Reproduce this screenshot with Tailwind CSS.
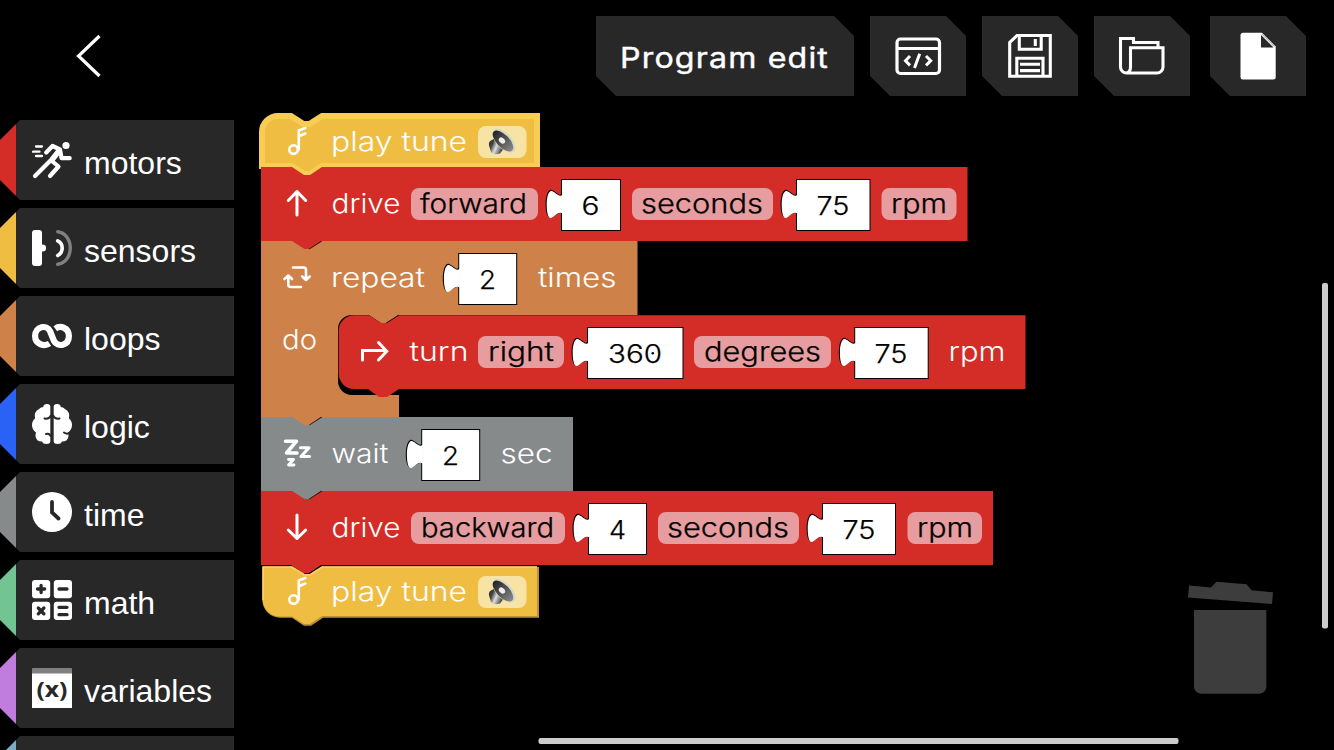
<!DOCTYPE html>
<html lang="en">
<head>
<meta charset="utf-8">
<title>Program edit</title>
<script src="https://cdn.jsdelivr.net/npm/@tailwindcss/browser@4"></script>
</head>
<body class="bg-black">
<div class="w-[1334px] h-[750px] bg-black overflow-hidden flex flex-col text-white">
  <header class="h-[104px] shrink-0 flex items-start pt-4 pl-[68px] pr-7">
    <button class="w-10 h-20 flex items-center justify-center">
      <svg class="w-10 h-12" viewBox="68 32 40 48" fill="none" stroke="#fff" stroke-width="3.2"><path d="M99.500 36L78.500 56L99.500 76"/></svg>
    </button>
    <div class="ml-auto flex">
      <div class="w-[258px] h-20 bg-[#282828] flex items-center justify-center [clip-path:polygon(0_0,238px_0,100%_20px,100%_100%,20px_100%,0_60px)]">
        <svg class="w-[258px] h-20" viewBox="596 16 258 80"><text x="620" y="68" textLength="209" lengthAdjust="spacingAndGlyphs" class="font-['Inter',sans-serif] text-[28px] font-normal tracking-[1px] fill-white" stroke="#fff" stroke-width=".4">Program edit</text></svg>
      </div>
      <button class="ml-4 w-24 h-20 bg-[#282828] [clip-path:polygon(0_0,76px_0,100%_20px,100%_100%,20px_100%,0_60px)]">
        <svg class="w-24 h-20" viewBox="870 16 96 80" fill="none" stroke="#fff" stroke-width="3.200"><rect x="897" y="39" width="42.500" height="34.500" rx="3.500"/><path d="M897 48.500H939.500M910 56l-4.500 4.700l4.500 4.700M919.700 53.800L914.500 68M926 56l4.700 4.700l-4.700 4.700" stroke-width="3"/></svg>
      </button>
      <button class="ml-4 w-24 h-20 bg-[#282828] [clip-path:polygon(0_0,76px_0,100%_20px,100%_100%,20px_100%,0_60px)]">
        <svg class="w-24 h-20" viewBox="982 16 96 80" fill="none" stroke="#fff" stroke-width="3.100"><path d="M1017 35.500H1050.300V76.300H1009.700V42.500Z"/><path d="M1019.300 36V49.300H1041.200V36M1016.800 76V58.300H1043V76M1020 64.300h20M1020 70.600h20M1035.300 39v7"/></svg>
      </button>
      <button class="ml-4 w-24 h-20 bg-[#282828] [clip-path:polygon(0_0,76px_0,100%_20px,100%_100%,20px_100%,0_60px)]">
        <svg class="w-24 h-20" viewBox="1094 16 96 80" fill="none" stroke="#fff" stroke-width="3.100"><path d="M1158 47V42.500H1133.500V38.500H1120.500V67a6 6 0 0 0 6 6H1157a6 6 0 0 0 6-6V47.700H1130.500V67q0 5-4 6"/></svg>
      </button>
      <button class="ml-5 w-24 h-20 bg-[#282828] [clip-path:polygon(0_0,76px_0,100%_20px,100%_100%,20px_100%,0_60px)]">
        <svg class="w-24 h-20" viewBox="1210 16 96 80"><path fill="#fff" d="M1243 32.700H1262L1275.700 46.500V77a2.500 2.500 0 0 1-2.500 2.500H1243a2.500 2.500 0 0 1-2.500-2.500V35.200a2.500 2.500 0 0 1 2.500-2.500Z"/><path fill="#282828" d="M1261 35V47.500H1273.500Z"/><path stroke="#bbb" stroke-width="1.200" d="M1262 34L1274.500 46.500"/></svg>
      </button>
    </div>
  </header>

  <div class="flex h-[646px]">
    <nav class="w-[234px] shrink-0 pt-4 flex flex-col gap-2 overflow-hidden font-['Liberation_Sans',Arial,sans-serif] text-[32px] leading-9">
      <div class="h-20 shrink-0 flex">
        <i class="w-4 bg-[#d42d27] [clip-path:polygon(100%_4px,100%_76px,0_60px,0_20px)]"></i>
        <div class="w-[218px] bg-[#282828] pl-4 flex items-center gap-3 [clip-path:polygon(4px_0,100%_0,100%_100%,4px_100%,0_76px,0_4px)]">
          <svg class="size-10" viewBox="32 140 40 40" fill="none" stroke="#fff" stroke-linecap="round" stroke-linejoin="round"><circle cx="66" cy="145.500" r="3.600" fill="#fff" stroke="none"/><path stroke-width="4.200" d="M46.200 152.500L52.500 146L60 149.500L61.500 158.200H69.700M52 159L35 176M52.500 161.500L58.500 166.500L50 176"/><path stroke-width="5.500" d="M58.500 151.500L53 158.500"/><path stroke-width="2.300" d="M36 146.500h6M33 151.700h6.500M36 156h6"/></svg>
          <span class="pt-[6px]">motors</span>
        </div>
      </div>
      <div class="h-20 shrink-0 flex">
        <i class="w-4 bg-[#f0bd43] [clip-path:polygon(100%_4px,100%_76px,0_60px,0_20px)]"></i>
        <div class="w-[218px] bg-[#282828] pl-4 flex items-center gap-3 [clip-path:polygon(4px_0,100%_0,100%_100%,4px_100%,0_76px,0_4px)]">
          <svg class="size-10" viewBox="32 228 40 40" fill="none" stroke-linecap="round"><rect x="32" y="230" width="10" height="36" rx="3" fill="#fff"/><circle cx="42.500" cy="248" r="3.600" fill="#fff"/><path stroke="#fff" stroke-width="3.600" d="M57.700 240.800Q62.200 243 62.200 248T57.700 255.500"/><path stroke="#808080" stroke-width="3.400" d="M57.700 231.700C65.500 232.500 70.300 240 70.300 248S65.500 263.500 57.700 264.300"/></svg>
          <span class="pt-[6px]">sensors</span>
        </div>
      </div>
      <div class="h-20 shrink-0 flex">
        <i class="w-4 bg-[#ce8148] [clip-path:polygon(100%_4px,100%_76px,0_60px,0_20px)]"></i>
        <div class="w-[218px] bg-[#282828] pl-4 flex items-center gap-3 [clip-path:polygon(4px_0,100%_0,100%_100%,4px_100%,0_76px,0_4px)]">
          <svg class="size-10" viewBox="32 316 40 40" fill="none" stroke="#fff" stroke-width="6.200"><path d="M49.500 343.500C44 347 35.100 344 35.100 336C35.100 326 47 324.500 50 331L54 341C57.500 347.500 68.900 346 68.900 336C68.900 328 60.500 324.800 55.300 328.700"/></svg>
          <span class="pt-[6px]">loops</span>
        </div>
      </div>
      <div class="h-20 shrink-0 flex">
        <i class="w-4 bg-[#2a62f6] [clip-path:polygon(100%_4px,100%_76px,0_60px,0_20px)]"></i>
        <div class="w-[218px] bg-[#282828] pl-4 flex items-center gap-3 [clip-path:polygon(4px_0,100%_0,100%_100%,4px_100%,0_76px,0_4px)]">
          <svg class="size-10" viewBox="0 0 40 40"><path fill="#fff" d="M18.300 2.500V37.500Q18 40 14.500 40Q11 40 10 37.500Q4 37.500 3.500 32Q3.300 30 4 28.500Q0 26 0 21Q0 17 3 14.500Q1.500 8 7 5Q9 3 11.200 3Q11.500 0 15 0Q18.300 0 18.300 2.500ZM21.700 2.500V37.500Q22 40 25.500 40Q29 40 30 37.500Q36 37.500 36.500 32Q36.700 30 36 28.500Q40 26 40 21Q40 17 37 14.500Q38.500 8 33 5Q31 3 28.800 3Q28.500 0 25 0Q21.700 0 21.700 2.500Z"/><path fill="none" stroke="#282828" stroke-width="2" stroke-linecap="round" d="M19 11.500Q17 15.500 12.500 14.500M18.500 32Q17.500 29 14 30M21 11.500Q23 15.500 27.500 14.500M32 28.500Q35 30.500 37 29"/></svg>
          <span class="pt-[6px]">logic</span>
        </div>
      </div>
      <div class="h-20 shrink-0 flex">
        <i class="w-4 bg-[#868a8a] [clip-path:polygon(100%_4px,100%_76px,0_60px,0_20px)]"></i>
        <div class="w-[218px] bg-[#282828] pl-4 flex items-center gap-3 [clip-path:polygon(4px_0,100%_0,100%_100%,4px_100%,0_76px,0_4px)]">
          <svg class="size-10" viewBox="0 0 40 40"><circle cx="20" cy="20" r="20" fill="#fff"/><path d="M20 10V20.500L26.500 26.500" fill="none" stroke="#282828" stroke-width="3.800" stroke-linecap="round"/></svg>
          <span class="pt-[6px]">time</span>
        </div>
      </div>
      <div class="h-20 shrink-0 flex">
        <i class="w-4 bg-[#72c593] [clip-path:polygon(100%_4px,100%_76px,0_60px,0_20px)]"></i>
        <div class="w-[218px] bg-[#282828] pl-4 flex items-center gap-3 [clip-path:polygon(4px_0,100%_0,100%_100%,4px_100%,0_76px,0_4px)]">
          <svg class="size-10" viewBox="0 0 40 40"><g fill="#fff"><rect width="18.200" height="18.200" rx="3"/><rect x="21.800" width="18.200" height="18.200" rx="3"/><rect y="21.800" width="18.200" height="18.200" rx="3"/><rect x="21.800" y="21.800" width="18.200" height="18.200" rx="3"/></g><path fill="none" stroke="#282828" stroke-width="3.300" stroke-linecap="round" d="M5.500 9h7.200M9.100 5.400v7.200M27 9h8M6.300 28l5.600 5.800M11.900 28l-5.600 5.800M27 27.300h8M27 34.700h8"/></svg>
          <span class="pt-[6px]">math</span>
        </div>
      </div>
      <div class="h-20 shrink-0 flex">
        <i class="w-4 bg-[#c17ddd] [clip-path:polygon(100%_4px,100%_76px,0_60px,0_20px)]"></i>
        <div class="w-[218px] bg-[#282828] pl-4 flex items-center gap-3 [clip-path:polygon(4px_0,100%_0,100%_100%,4px_100%,0_76px,0_4px)]">
          <svg class="size-10" viewBox="0 0 40 40"><rect width="40" height="8" rx="1" fill="#808080"/><rect y="5.500" width="40" height="34.500" fill="#fff"/><text x="4.500" y="28.800" textLength="31" lengthAdjust="spacingAndGlyphs" class="font-['Noto_Sans',sans-serif] font-bold text-[21px] fill-[#282828]">(x)</text></svg>
          <span class="pt-[6px]">variables</span>
        </div>
      </div>
      <div class="h-20 shrink-0 flex">
        <i class="w-4 bg-[#7aaec4] [clip-path:polygon(100%_4px,100%_76px,0_60px,0_20px)]"></i>
        <div class="w-[218px] bg-[#282828] [clip-path:polygon(4px_0,100%_0,100%_100%,4px_100%,0_76px,0_4px)]"></div>
      </div>
    </nav>

    <main class="flex-1">
      <svg class="w-[1100px] h-[646px] font-['Inter',sans-serif]" viewBox="234 104 1100 646">
        <defs>
          <linearGradient id="cone" x1="0" y1="0" x2="1" y2=".5"><stop offset="0" stop-color="#222"/><stop offset=".35" stop-color="#444"/><stop offset=".6" stop-color="#ddd"/><stop offset="1" stop-color="#333"/></linearGradient>
          <linearGradient id="dish" x1="0" y1="0" x2="1" y2="0"><stop offset="0" stop-color="#222"/><stop offset=".5" stop-color="#555"/><stop offset="1" stop-color="#8a8a8a"/></linearGradient>
          <!-- value plug: left connector for a number box whose edge is at x=0 -->
          <g id="plug"><path fill="#000" d="M0 26.500C-2 30 -5 25 -10 22.800C-13.500 22 -15.900 29 -15.900 37.500C-15.900 44 -14.500 50 -11.500 50.500L0 45Z"/><path fill="#fff" d="M1.200 27.500C-2 31 -5 26 -9.500 24C-13 23 -14.800 30 -14.800 37.500C-14.800 44 -13.800 51.500 -10.500 51C-7 50 -3.500 43.500 1.200 46.500Z"/></g>
          <!-- pop-up speaker picker -->
          <g id="speaker"><rect x="478" y="126" width="48.500" height="32" rx="8" fill="#f7e3a4"/><path fill="url(#cone)" d="M493 139.500Q488 141 489 145.500L491 152Q494 155.500 500 153.500L505 147L497 136Z"/><ellipse cx="503.800" cy="140.700" rx="14.500" ry="7.600" transform="rotate(46 503.800 140.700)" fill="#d3d8cc"/><ellipse cx="503" cy="141" rx="13.300" ry="6.300" transform="rotate(46 503 141)" fill="url(#dish)"/><ellipse cx="502" cy="140.500" rx="3.600" ry="2.600" transform="rotate(46 502 140.500)" fill="#eee"/></g>
          <g id="note" fill="none" stroke="#fff" stroke-width="2.600" stroke-linecap="round"><circle cx="293.600" cy="149.600" r="4.300"/><path d="M298.800 149.500V130.500L305.300 128M298.800 136.200L305.300 133.500"/></g>
        </defs>

        <!-- selected play tune -->
        <path fill="#f0bd43" stroke="#f7cd53" stroke-width="6" d="M262 166V132A16 16 0 0 1 278 116H291L303.500 124H309.500L322 116H537V166H322L310 174H304L292 166Z"/>
        <use href="#note"/><use href="#speaker"/>

        <!-- drive forward -->
        <path fill="#d42d27" d="M261 167H292L304 175H310L322 167H967.500V241H321L309 249H303L291 241H261Z"/>
        <!-- repeat loop -->
        <path fill="#ce8148" d="M261 241H292L304.500 249H309.500L322 241H637.500V315H398L386 323H381L369 315H352A14 14 0 0 0 338 329V381A14 14 0 0 0 352 395H399V417H321L309 425H303L291 417H261Z"/>
        <!-- turn right -->
        <path fill="#d42d27" d="M354 315.200H369L381 323H387L399 315.200H1025.500V389H399L387 397H379L368 389H354A15.500 15.500 0 0 1 338.700 373.500V330.500A15.500 15.500 0 0 1 354 315.200Z"/>
        <path fill="#ce8148" d="M369.500 315H398L386 322.700H382Z"/>
        <!-- wait -->
        <path fill="#868a8a" d="M261 417H292L304.500 425H309.500L322 417H573V491H321L309 499H303L291 491H261Z"/>
        <!-- drive backward -->
        <path fill="#d42d27" d="M261 491H292L304.500 499H309.500L322 491H993V565H321L309 573H303L291 565H261Z"/>
        <path stroke="#000" stroke-opacity=".6" stroke-width=".8" d="M309.500 249L322 241M386 323L399 315M309.500 425L322 417M309.500 499L322 491"/>
        <!-- last play tune -->
        <path fill="#b8913a" d="M262.500 567H292L304 575H310L322 567H539V617.700H323L311 625.700H304L292 617.700H280A17.500 17.500 0 0 1 262.500 600Z"/>
        <path fill="#f0bd43" d="M262.500 566.500H292L304 574.500H310L322 566.500H537V616H322L310 624H304L292 616.500H280A17.500 17.500 0 0 1 262.500 600Z"/>
        <path fill="none" stroke="#f7d16b" stroke-width="1.700" d="M263.200 600V567H292L304.500 574.800H310L322 567H537"/>
        <use href="#note" y="450"/><use href="#speaker" y="450"/>

        <!-- drop-down fields -->
        <g class="fill-[#e79c9f]">
          <rect x="411" y="188" width="127" height="32" rx="8"/><rect x="632" y="188" width="141" height="32" rx="8"/><rect x="881.500" y="188" width="75" height="32" rx="8"/>
          <rect x="478" y="336" width="86" height="32" rx="8"/><rect x="694" y="336" width="137" height="32" rx="8"/>
          <rect x="411" y="512" width="154" height="32" rx="8"/><rect x="658" y="512" width="141" height="32" rx="8"/><rect x="907.500" y="512" width="74.500" height="32" rx="8"/>
        </g>

        <!-- number fields -->
        <g fill="#fff" stroke="#000">
          <rect x="561.500" y="179.500" width="59" height="51"/><rect x="796.500" y="179.500" width="73.500" height="51"/>
          <rect x="458.700" y="253.500" width="58" height="51"/>
          <rect x="587.500" y="327.500" width="95.500" height="51"/><rect x="854.700" y="327.500" width="73.500" height="51"/>
          <rect x="421.700" y="429.500" width="58" height="51"/>
          <rect x="588.500" y="503.500" width="58" height="51"/><rect x="822.500" y="503.500" width="73" height="51"/>
        </g>
        <use href="#plug" x="561.500" y="167"/><use href="#plug" x="796.500" y="167"/><use href="#plug" x="458.700" y="241"/>
        <use href="#plug" x="587.500" y="315"/><use href="#plug" x="854.700" y="315"/><use href="#plug" x="421.700" y="417"/>
        <use href="#plug" x="588.500" y="491"/><use href="#plug" x="822.500" y="491"/>

        <!-- block icons -->
        <g fill="none" stroke="#fff" stroke-width="3" stroke-linecap="round" stroke-linejoin="round">
          <path d="M297 215V191.500M288.300 200.500L297 191.500L305.700 200.500"/>
          <path d="M297 515V538.500M288.300 530L297 538.500L305.700 530"/>
          <path stroke-width="2.600" d="M284.500 279L288.300 275.500L292 279M288.300 276V284.500Q288.300 287 291 287H301M309.700 276.500L306 280L302.200 276.500M306 279V270Q306 267.500 303.500 267.500H293"/>
          <path stroke-linejoin="miter" d="M362.500 360V350.500H386M378.500 342.500L386.700 351.300L378.500 360"/>
          <path stroke-width="3.600" d="M285.500 441.200H296.500L286.500 453H297"/>
          <path stroke-width="3.100" d="M300.500 447.700H309L301 456.500H309.500"/>
          <path stroke-width="2.800" d="M288.500 459.500H293.500L288.500 465H294"/>
        </g>

        <!-- block labels -->
        <g class="fill-white text-[27px] font-light">
          <text x="331" y="151" textLength="136" lengthAdjust="spacingAndGlyphs">play tune</text>
          <text x="331.500" y="213" textLength="69" lengthAdjust="spacingAndGlyphs">drive</text>
          <text x="331" y="287" textLength="94" lengthAdjust="spacingAndGlyphs">repeat</text>
          <text x="538" y="287" textLength="78.500" lengthAdjust="spacingAndGlyphs">times</text>
          <text x="282" y="349" textLength="35" lengthAdjust="spacingAndGlyphs">do</text>
          <text x="409.500" y="361" textLength="59" lengthAdjust="spacingAndGlyphs">turn</text>
          <text x="948.500" y="361" textLength="57" lengthAdjust="spacingAndGlyphs">rpm</text>
          <text x="331.500" y="463" textLength="57" lengthAdjust="spacingAndGlyphs">wait</text>
          <text x="500.500" y="463" textLength="52" lengthAdjust="spacingAndGlyphs">sec</text>
          <text x="331.500" y="537" textLength="69" lengthAdjust="spacingAndGlyphs">drive</text>
          <text x="331" y="601" textLength="136" lengthAdjust="spacingAndGlyphs">play tune</text>
        </g>
        <g class="fill-black text-[27px] font-light" stroke="#000" stroke-width=".25">
          <text x="420" y="213" textLength="107" lengthAdjust="spacingAndGlyphs">forward</text>
          <text x="641" y="213" textLength="122" lengthAdjust="spacingAndGlyphs">seconds</text>
          <text x="891" y="213" textLength="56" lengthAdjust="spacingAndGlyphs">rpm</text>
          <text x="488" y="361" textLength="66" lengthAdjust="spacingAndGlyphs">right</text>
          <text x="704" y="361" textLength="117" lengthAdjust="spacingAndGlyphs">degrees</text>
          <text x="421" y="537" textLength="133" lengthAdjust="spacingAndGlyphs">backward</text>
          <text x="667" y="537" textLength="122" lengthAdjust="spacingAndGlyphs">seconds</text>
          <text x="917" y="537" textLength="56" lengthAdjust="spacingAndGlyphs">rpm</text>
          <g class="text-[26px]">
            <text x="581.500" y="214.500" textLength="18" lengthAdjust="spacingAndGlyphs">6</text>
            <text x="816.500" y="214.500" textLength="33" lengthAdjust="spacingAndGlyphs">75</text>
            <text x="479" y="288.500" textLength="17" lengthAdjust="spacingAndGlyphs">2</text>
            <text x="608" y="362.500" textLength="54" lengthAdjust="spacingAndGlyphs">360</text>
            <text x="874.500" y="362.500" textLength="33" lengthAdjust="spacingAndGlyphs">75</text>
            <text x="442" y="464.500" textLength="17" lengthAdjust="spacingAndGlyphs">2</text>
            <text x="609" y="538.500" textLength="17" lengthAdjust="spacingAndGlyphs">4</text>
            <text x="842.500" y="538.500" textLength="33" lengthAdjust="spacingAndGlyphs">75</text>
          </g>
        </g>
        <!-- dotted zero of 360 -->
        <circle cx="652.800" cy="353.300" r="1.300" fill="#000"/>

        <!-- trash can -->
        <g fill="#3d3d3d"><path d="M1189 585.500L1211 587.500L1216.500 581.700L1246.500 584.200L1251.500 590.300L1273 592.300L1272 604L1188 597.500Z"/><path d="M1194 610H1266.300V686.500A7 7 0 0 1 1259.300 693.700H1201A7 7 0 0 1 1194 686.500Z"/></g>
        <!-- scrollbars -->
        <rect x="1322" y="283" width="6" height="345.500" rx="2" fill="#ccc"/>
        <rect x="538.500" y="738" width="640" height="6" rx="2" fill="#ccc"/>
      </svg>
    </main>
  </div>
</div>
</body>
</html>
